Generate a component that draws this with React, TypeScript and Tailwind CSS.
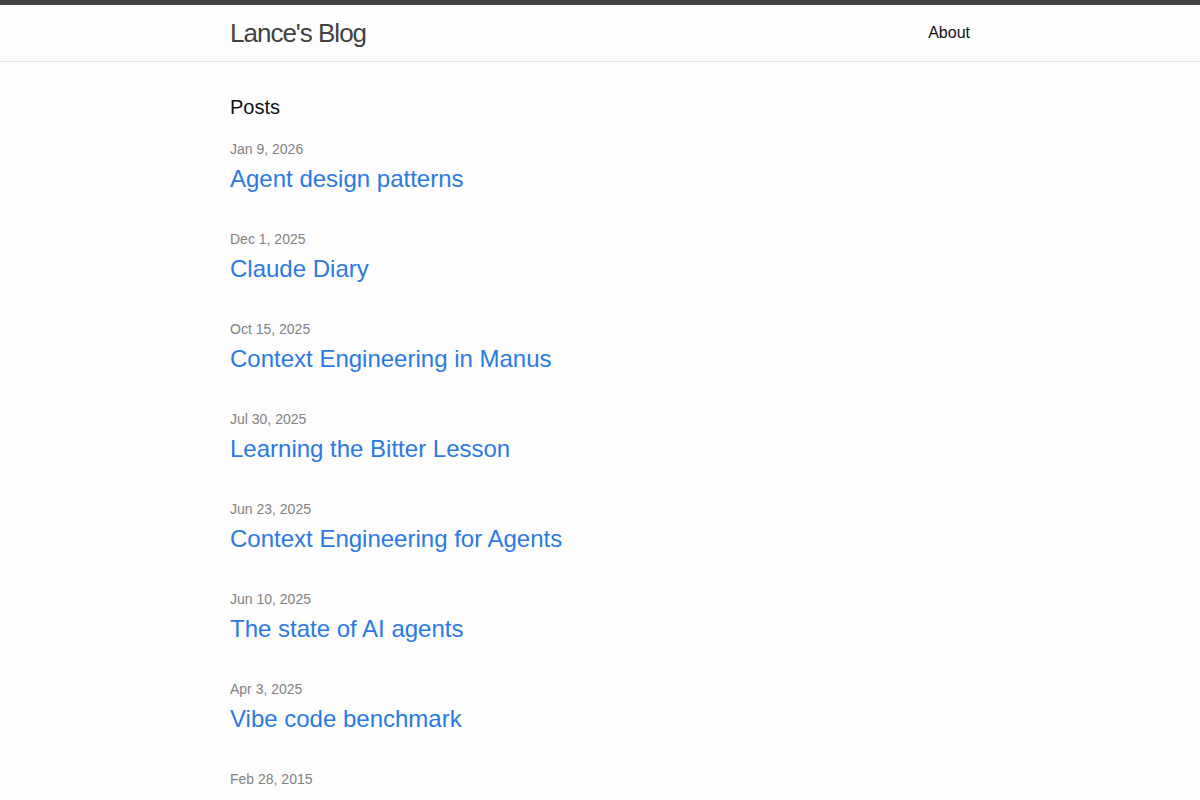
type Post = {
  date: string;
  title?: string;
};

const posts: Post[] = [
  { date: "Jan 9, 2026", title: "Agent design patterns" },
  { date: "Dec 1, 2025", title: "Claude Diary" },
  { date: "Oct 15, 2025", title: "Context Engineering in Manus" },
  { date: "Jul 30, 2025", title: "Learning the Bitter Lesson" },
  { date: "Jun 23, 2025", title: "Context Engineering for Agents" },
  { date: "Jun 10, 2025", title: "The state of AI agents" },
  { date: "Apr 3, 2025", title: "Vibe code benchmark" },
  { date: "Feb 28, 2015" },
];

export default function App() {
  return (
    <div className="min-h-screen bg-[#fdfdfd] text-[16px] leading-[1.5] text-[#111] font-['Liberation_Sans',Helvetica,Arial,sans-serif]">
      <header className="min-h-[62px] border-t-[5px] border-b border-t-[#424242] border-b-[#e8e8e8]">
        <div className="mx-auto flex max-w-[800px] items-start justify-between px-[30px] pt-px">
          <a
            href="#"
            className="text-[26px] font-light leading-[54px] tracking-[-1px] text-[#424242]"
          >
            Lance's Blog
          </a>
          <nav>
            <a href="#" className="leading-[54px] text-[#111]">
              About
            </a>
          </nav>
        </div>
      </header>

      <main className="py-[30px]">
        <div className="mx-auto max-w-[800px] px-[30px]">
          <h2 className="mb-[15px] text-[20px] leading-[30px]">Posts</h2>
          <ul>
            {posts.map((p) => (
              <li key={p.date} className="mb-[30px]">
                <div className="h-[24px] text-[14px] leading-[24px] text-[#828282]">
                  {p.date}
                </div>
                {p.title ? (
                  <h3>
                    <a
                      href="#"
                      className="block text-[24px] leading-[36px] text-[#2a7ae2]"
                    >
                      {p.title}
                    </a>
                  </h3>
                ) : null}
              </li>
            ))}
          </ul>
        </div>
      </main>
    </div>
  );
}
